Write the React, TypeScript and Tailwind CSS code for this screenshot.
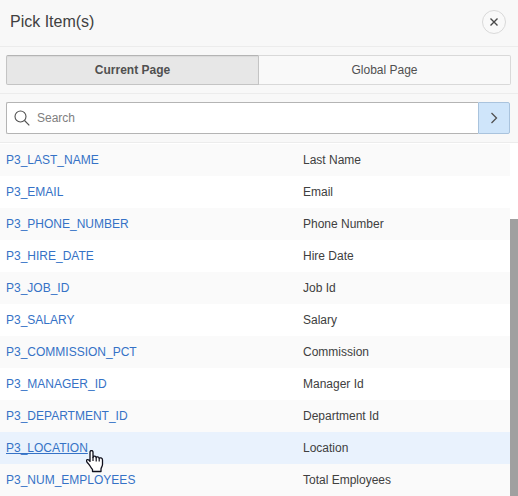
import { useState } from "react";

type Item = { name: string; label: string };

const items: Item[] = [
  { name: "P3_LAST_NAME", label: "Last Name" },
  { name: "P3_EMAIL", label: "Email" },
  { name: "P3_PHONE_NUMBER", label: "Phone Number" },
  { name: "P3_HIRE_DATE", label: "Hire Date" },
  { name: "P3_JOB_ID", label: "Job Id" },
  { name: "P3_SALARY", label: "Salary" },
  { name: "P3_COMMISSION_PCT", label: "Commission" },
  { name: "P3_MANAGER_ID", label: "Manager Id" },
  { name: "P3_DEPARTMENT_ID", label: "Department Id" },
  { name: "P3_LOCATION", label: "Location" },
  { name: "P3_NUM_EMPLOYEES", label: "Total Employees" },
];

const hovered = "P3_LOCATION";

function HandCursor() {
  return (
    <svg
      className="pointer-events-none absolute top-2.5 left-full z-10 -ml-0.5 h-[23px] w-[18px]"
      viewBox="0 0 18 23"
      aria-hidden="true"
    >
      <path
        d="M4 2.2C4 .9 4.7.5 5.5.5S7 .9 7 2.2V7.3C7.3 5.8 10 5.8 10.2 7.6C10.6 6.3 13 6.6 13.2 8.4C13.8 7.4 16.5 7.7 16.5 10V14.5C16.5 16.5 15 17.5 15 19V21.5H6.5V19.5C5 18 4 15.5 2.8 14.2C1.5 12.8.5 12 .5 10.8C.5 9.5 2 9.3 2.9 10L4 11.4Z"
        fill="#fff"
        stroke="#10101c"
        strokeWidth="1.3"
        strokeLinejoin="round"
      />
      <path d="M7 7V11M10.2 7.6V11.5M13.2 8.4V11.5" fill="none" stroke="#10101c" strokeWidth="1.2" />
    </svg>
  );
}

function ItemRow({ item }: { item: Item }) {
  const active = item.name === hovered;
  return (
    <tr className={active ? "h-8 bg-[#e9f2fd]" : "h-8 odd:bg-[#fafafa] even:bg-white"}>
      <td className="w-[303px] pl-1.5">
        <span className="relative inline-block">
          <a
            href="#"
            className={`text-[#3572c6] underline-offset-1 [text-decoration-skip-ink:none] hover:underline ${active ? "underline" : ""}`}
          >
            {item.name}
          </a>
          {active && <HandCursor />}
        </span>
      </td>
      <td>{item.label}</td>
    </tr>
  );
}

export default function App() {
  const [tab, setTab] = useState("current");

  return (
    <div className="flex h-screen flex-col overflow-hidden bg-white font-['Liberation_Sans',Arial,sans-serif] text-xs text-[#404040]">
      <header className="flex h-[47px] shrink-0 items-center justify-between border-b border-[#ececec] bg-[#f8f8f8] pr-3 pl-2.5">
        <h1 className="pb-0.5 text-base">Pick Item(s)</h1>
        <button
          type="button"
          aria-label="Close"
          className="mb-0.5 flex size-6 items-center justify-center rounded-full border border-[#d9d9d9] bg-[#f9f9f9]"
        >
          <svg className="size-2.5" viewBox="0 0 10 10" aria-hidden="true">
            <path d="M1.5 1.5L8.5 8.5M8.5 1.5L1.5 8.5" stroke="#484848" strokeWidth="1.4" />
          </svg>
        </button>
      </header>

      <div className="flex shrink-0 border-b border-[#ececec] bg-[#f8f8f8] py-2 pr-[7px] pl-1.5">
        <button
          type="button"
          aria-pressed={tab === "current"}
          onClick={() => setTab("current")}
          className="h-[30px] flex-1 rounded-l-xs border border-[#c4c4c4] border-t-[#b4b4b4] bg-[#e7e7e7] font-bold text-[#505050] shadow-[inset_0_1px_1px_#dadada]"
        >
          Current Page
        </button>
        <button
          type="button"
          aria-pressed={tab === "global"}
          onClick={() => setTab("global")}
          className="h-[30px] flex-1 rounded-r-xs border border-l-0 border-[#d9d9d9] bg-[#f9f9f9] text-[#505050]"
        >
          Global Page
        </button>
      </div>

      <form
        className="flex shrink-0 border-b border-[#ececec] bg-[#f8f8f8] py-2 pr-2 pl-1.5"
        onSubmit={(e) => e.preventDefault()}
      >
        <label className="flex h-8 flex-1 items-center gap-[7px] rounded-l-xs border border-r-0 border-[#b4b4b4] bg-white pl-[7px]">
          <svg className="size-4" viewBox="0 0 16 16" fill="none" stroke="#505050" strokeWidth="1.1" aria-hidden="true">
            <circle cx="6.5" cy="6.5" r="5.5" />
            <path d="M10.5 10.5L15.3 15.3" />
          </svg>
          <input
            type="text"
            aria-label="Search"
            placeholder="Search"
            className="min-w-0 flex-1 bg-transparent outline-none placeholder:text-[#808080]"
          />
        </label>
        <button
          type="submit"
          aria-label="Go"
          className="flex h-8 w-8 items-center justify-center rounded-r-xs border border-[#a9c3dd] bg-[#cfe5fa]"
        >
          <svg className="h-3 w-2" viewBox="0 0 8 12" aria-hidden="true">
            <path d="M1.5 1L6.5 6L1.5 11" fill="none" stroke="#505050" strokeWidth="1.3" />
          </svg>
        </button>
      </form>

      <main className="flex min-h-0 flex-1 pt-px">
        <div className="min-w-0 flex-1 overflow-hidden">
          <table className="w-full table-fixed border-collapse">
            <tbody>
              {items.map((item) => (
                <ItemRow key={item.name} item={item} />
              ))}
            </tbody>
          </table>
        </div>
        <div className="flex w-2 flex-col pt-[75px]">
          <div className="flex-1 bg-[#a0a0a0]" />
        </div>
      </main>
    </div>
  );
}
